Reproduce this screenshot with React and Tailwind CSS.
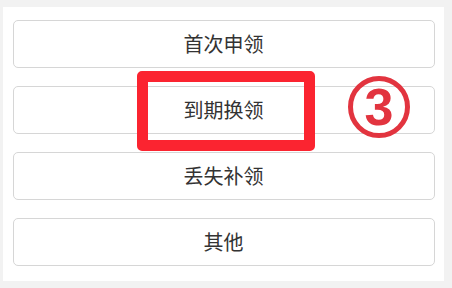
const items = ["首次申领", "到期换领", "丢失补领", "其他"];

export default function App() {
  return (
    <div
      className="relative w-[452px] h-[288px] bg-[#f2f2f2] pt-[7px] pl-[3px]"
      style={{ fontFamily: '"Noto Sans CJK SC", "Noto Sans", sans-serif' }}
    >
      <div className="w-[441px] h-[274px] bg-white px-[9.5px] pt-[13px] flex flex-col gap-[18px]">
        {items.map((label) => (
          <button
            key={label}
            className="h-[48px] w-full rounded-[5px] border border-[#d6d6d6] bg-white text-[20px] text-[#333] flex items-center justify-center"
          >
            {label}
          </button>
        ))}
      </div>

      {/* annotation overlays */}
      <div className="absolute left-[137px] top-[71px] w-[178px] h-[80px] rounded-[5px] border-[11px] border-[#fb2430]" />
      <div className="absolute left-[348px] top-[76px] w-[62px] h-[62px] rounded-full border-[5px] border-[#e2343f] flex items-center justify-center font-['Liberation_Sans',sans-serif] text-[52px] font-bold leading-none text-[#e2343f]">
        3
      </div>
    </div>
  );
}
